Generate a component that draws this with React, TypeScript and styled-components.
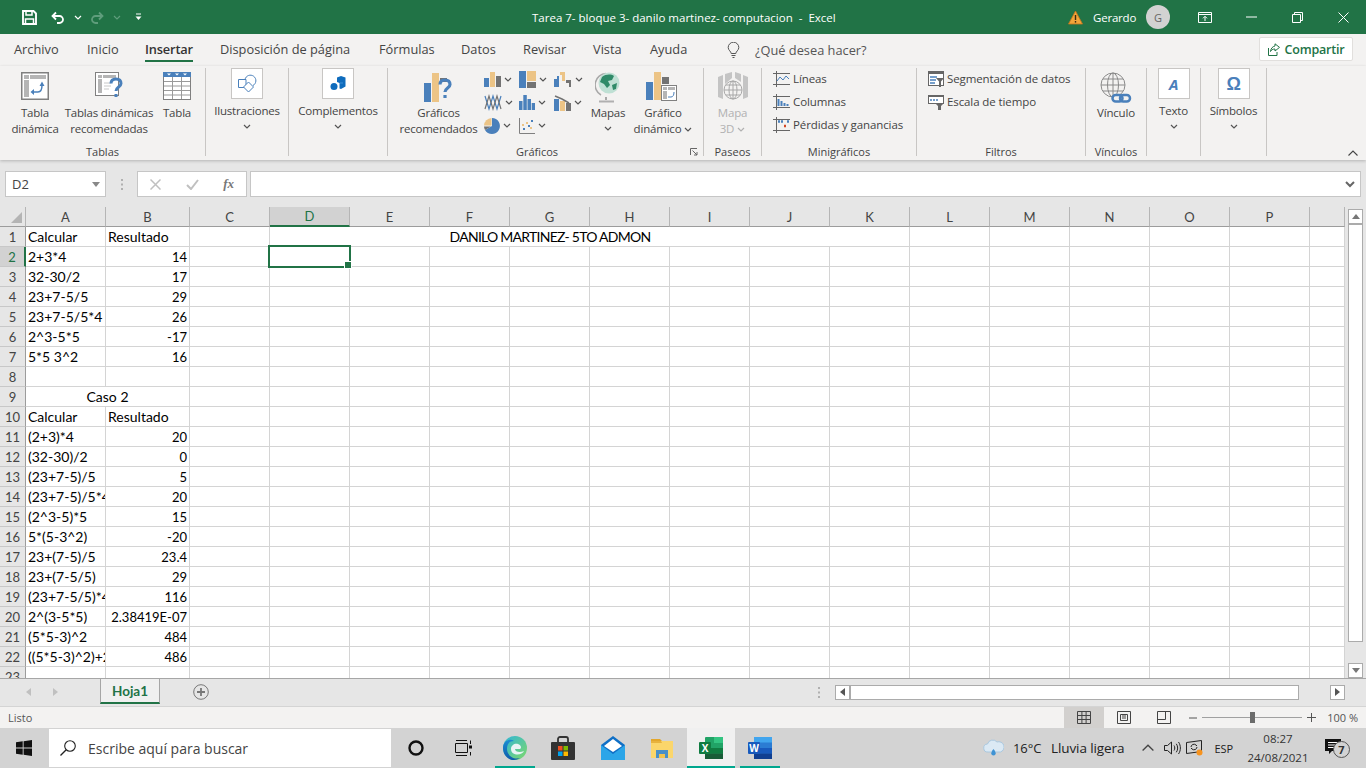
import React from 'react';
import styled, { createGlobalStyle } from 'styled-components';

const Global = createGlobalStyle`
  html, body { margin: 0; padding: 0; background: #e6e6e6; }
  * { box-sizing: border-box; }
  svg { display: block; flex: none; }
`;

const UI = `"Open Sans", "Noto Sans", "Liberation Sans", sans-serif`;
const SHEET = `Lato, "Liberation Sans", sans-serif`;
const GREEN = '#217346';
const BLUE = '#4a80bb';
const TAN = '#ecc486';
const GREY = '#737373';

const Page = styled.div`
  width: 1366px; height: 768px; overflow: hidden;
  display: flex; flex-direction: column;
  font-family: ${UI}; color: #444; background: #e6e6e6;
`;

/* ---------- title bar ---------- */
const TitleBar = styled.header`
  height: 34px; flex: none; background: ${GREEN}; color: #fff;
  display: flex; align-items: center; font-size: 11.5px;
`;
const Qat = styled.div`
  width: 532px; flex: none; display: flex; align-items: center; padding-left: 22px;
`;
const QatSlot = styled.div<{ $w: number }>`
  width: ${p => p.$w}px; display: flex; align-items: center;
`;
const TitleText = styled.div`flex: none; width: 536px; white-space: pre;`;
const UserName = styled.div`font-size: 11.5px; width: 53px; letter-spacing: -0.2px;`;
const WarnSlot = styled.div`width: 25px;`;
const Avatar = styled.div`
  width: 24px; height: 24px; border-radius: 50%; background: #d2d2d2; color: #666;
  font-size: 11px; display: flex; align-items: center; justify-content: center;
`;
const WinBtn = styled.div<{ $w: number }>`
  width: ${p => p.$w}px; display: flex; justify-content: center;
`;

/* ---------- tabs ---------- */
const TabRow = styled.nav`
  height: 32px; flex: none; background: #f3f2f1; position: relative;
  display: flex; align-items: flex-start; padding-left: 14px; font-size: 12.8px;
`;
const Tab = styled.div<{ $w: number; $active?: boolean }>`
  width: ${p => p.$w}px; flex: none; height: 28px; line-height: 31px; white-space: nowrap;
  color: ${p => (p.$active ? '#333' : '#444')};
  font-weight: ${p => (p.$active ? 600 : 400)};
  letter-spacing: ${p => (p.$active ? '-0.15px' : '0')};
  position: relative;
`;
const TabMark = styled.span`
  position: absolute; left: 0; top: 26px; width: 48px; height: 2px; background: ${GREEN};
`;
const Ask = styled.div`
  display: flex; align-items: center; gap: 15px; margin-left: 6px; height: 32px; font-size: 12.8px; color: #555;
`;
const Share = styled.button`
  margin-left: auto; margin-right: 13px; margin-top: 3px; width: 94px; height: 24px;
  background: #fff; border: 1px solid #e1dfdd; border-radius: 2px; color: ${GREEN};
  font: 600 12.5px ${UI}; letter-spacing: -0.2px; display: flex; align-items: center; justify-content: center; gap: 5px; padding: 0;
`;

/* ---------- ribbon ---------- */
const Ribbon = styled.section`
  height: 94px; flex: none; background: #f3f2f1; display: flex; padding-top: 2px;
  box-shadow: 0 1px 3px rgba(0,0,0,.22); position: relative; z-index: 1;
`;
const Group = styled.div<{ $w: number }>`
  width: ${p => p.$w}px; flex: none; height: 88px; display: flex; flex-direction: column;
  border-right: 1px solid #c8c6c4; position: relative;
`;
const GroupBody = styled.div<{ $pl?: number }>`
  flex: 1; min-height: 0; display: flex; padding-left: ${p => p.$pl ?? 0}px;
`;
const GroupLabel = styled.div<{ $pr?: number }>`
  height: 12px; line-height: 16px; text-align: center; font-size: 11px; color: #444;
  padding-right: ${p => p.$pr ?? 0}px; white-space: nowrap;
`;
const Launcher = styled.div`position: absolute; right: 5px; bottom: 0;`;
const Large = styled.div<{ $w: number; $muted?: boolean }>`
  width: ${p => p.$w}px; flex: none; display: flex; flex-direction: column; align-items: center;
  font-size: 11.5px; line-height: 16px; text-align: center; letter-spacing: -0.2px; white-space: nowrap;
  color: ${p => (p.$muted ? '#b1b1b1' : '#444')};
`;
const Caption = styled.div``;
const LargeIcon = styled.div`
  height: 37px; flex: none; display: flex; align-items: flex-start; padding-top: 4px;
`;
const Boxed = styled.div`
  width: 32px; height: 31px; flex: none; background: #fff; border: 1px solid #c8c6c4;
  display: flex; align-items: center; justify-content: center; margin-bottom: 4px;
`;
const BoxGlyph = styled.span<{ $omega?: boolean }>`
  color: ${BLUE}; font-weight: 700;
  font-size: ${p => (p.$omega ? 18 : 15)}px;
  font-family: ${p => (p.$omega ? `"Liberation Sans", sans-serif` : UI)};
  font-style: ${p => (p.$omega ? 'normal' : 'italic')};
`;
const ChevronRow = styled.div`height: 15px; flex: none; display: flex; align-items: center; justify-content: center;`;
const InlineChev = styled.span`display: inline-flex; vertical-align: middle; margin-left: 3px;`;
const ChartGrid = styled.div`
  width: 105px; flex: none; display: grid; grid-template-columns: 35px 35px 35px;
  grid-auto-rows: 23px; margin-left: 4px; align-content: start;
`;
const ChartCell = styled.div`display: flex; align-items: center; gap: 3px;`;
const SmallList = styled.div`display: flex; flex-direction: column; gap: 2px; width: 100%;`;
const SmallRow = styled.div`
  height: 21px; display: flex; align-items: center; gap: 3px; font-size: 11.5px; letter-spacing: -0.1px; color: #444; white-space: nowrap;
`;
const Collapse = styled.div`position: absolute; right: 8px; bottom: 4px;`;

/* ---------- formula bar ---------- */
const FormulaBar = styled.div`
  height: 47px; flex: none; display: flex; align-items: flex-start; padding: 11px 5px 0 5px; background: #e6e6e6;
`;
const FieldBox = styled.div`
  background: #fff; border: 1px solid #c6c6c6; height: 26px; display: flex; align-items: center;
`;
const NameBox = styled(FieldBox)`
  width: 101px; flex: none; justify-content: space-between; padding: 0 5px 0 6px;
  font-size: 13px; color: #444;
`;
const Dots = styled.div`width: 31px; flex: none; height: 26px; display: flex; align-items: center; justify-content: center;`;
const FxBox = styled(FieldBox)`
  width: 110px; flex: none; display: flex; justify-content: space-between; padding: 0 12px; margin-right: 3px;
`;
const Fx = styled.span`font: italic 700 13px "Liberation Serif", serif; color: #777;`;
const Input = styled(FieldBox)`flex: 1; justify-content: flex-end; padding-right: 5px;`;

/* ---------- sheet ---------- */
const SheetArea = styled.div`flex: 1; min-height: 0; display: flex; background: #e6e6e6;`;
const Sheet = styled.div`
  width: 1345px; flex: none; overflow: hidden; display: grid;
  grid-template-columns: 26px 80px 84px repeat(14, 80px) 35px;
  grid-auto-rows: 20px; background: #fff; align-content: start;
  font-family: ${SHEET}; font-size: 14px; color: #000;
`;
const Corner = styled.div`
  background: #e6e6e6; border-bottom: 1px solid #9c9c9c; border-right: 1px solid #b5b5b5; position: relative;
  &::after {
    content: ''; position: absolute; right: 3px; bottom: 3px; width: 0; height: 0;
    border-left: 11px solid transparent; border-bottom: 11px solid #b4b4b4;
  }
`;
const ColHead = styled.div<{ $sel?: boolean }>`
  background: ${p => (p.$sel ? '#d2d2d2' : '#e6e6e6')};
  border-bottom: ${p => (p.$sel ? `2px solid ${GREEN}` : '1px solid #9c9c9c')};
  border-right: 1px solid #b5b5b5;
  color: ${p => (p.$sel ? GREEN : '#444')};
  display: flex; align-items: center; justify-content: center; font-size: 13px;
`;
const RowHead = styled.div<{ $sel?: boolean }>`
  background: ${p => (p.$sel ? '#d2d2d2' : '#e6e6e6')};
  border-right: ${p => (p.$sel ? `2px solid ${GREEN}` : '1px solid #9c9c9c')};
  border-bottom: 1px solid #c8c8c8;
  color: ${p => (p.$sel ? GREEN : '#444')};
  display: flex; align-items: center; justify-content: center; font-size: 13px;
`;
const Cell = styled.div<{ $span?: number; $sel?: boolean }>`
  grid-column: span ${p => p.$span ?? 1};
  border-right: 1px solid #d4d4d4;
  border-bottom: 1px solid #d4d4d4;
  padding: 0 2px; line-height: 20px; white-space: nowrap; overflow: ${p => (p.$sel ? 'visible' : 'hidden')};
  position: relative;
`;
const NumberCell = styled(Cell)`text-align: right; font-size: 13px;`;
const CenterCell = styled(Cell)`text-align: center;`;
const TitleCell = styled(CenterCell)`border-right: none; letter-spacing: -0.75px;`;
const Selection = styled.span`
  position: absolute; left: -2px; top: -2px; width: 83px; height: 23px;
  border: 2px solid ${GREEN}; z-index: 2;
  &::after {
    content: ''; position: absolute; right: -3px; bottom: -3px; width: 6px; height: 6px;
    background: ${GREEN}; border: 1px solid #fff;
  }
`;
const VScroll = styled.div`
  flex: 1; display: flex; flex-direction: column; align-items: center; padding: 2px 3px 0 3px; position: relative;
`;
const ScrollBtn = styled.div`
  width: 15px; height: 15px; background: #fff; border: 1px solid #ababab; flex: none;
  display: flex; align-items: center; justify-content: center;
`;
const VThumb = styled.div`
  width: 15px; height: 418px; background: #fff; border: 1px solid #ababab; flex: none;
`;
const VRest = styled.div`flex: 1;`;

/* ---------- sheet tabs ---------- */
const SheetBar = styled.div`
  height: 28px; flex: none; display: flex; align-items: flex-start; background: #e6e6e6;
  border-top: 1px solid #a6a6a6;
`;
const NavArrows = styled.div`
  width: 100px; height: 26px; flex: none; display: flex; align-items: center; gap: 22px; padding-left: 26px;
`;
const SheetTab = styled.div`
  width: 60px; height: 26px; margin-top: -1px; flex: none; background: #f0f0f0;
  border: 1px solid #a6a6a6; border-top: 1px solid #a6a6a6; border-bottom: 2px solid ${GREEN};
  color: ${GREEN}; font: 700 13.5px ${SHEET}; display: flex; align-items: center; justify-content: center;
`;
const AddSheet = styled.div`margin-left: 33px; height: 26px; display: flex; align-items: center;`;
const HScrollWrap = styled.div`
  margin-left: auto; margin-right: 21px; height: 26px; display: flex; align-items: center;
`;
const Grip = styled.div`margin-right: 15px;`;
const HTrack = styled.div`width: 449px; height: 15px; background: #fff; border: 1px solid #ababab;`;
const HRest = styled.div`width: 31px;`;

/* ---------- status bar ---------- */
const StatusBar = styled.footer`
  height: 22px; flex: none; background: #f3f2f1; display: flex; align-items: center; font-size: 11px;
  border-top: 1px solid #d4d4d4; padding-left: 8px; color: #555;
`;
const ViewBtn = styled.div<{ $active?: boolean }>`
  width: 40px; height: 21px; display: flex; align-items: center; justify-content: center;
  background: ${p => (p.$active ? '#d2d0ce' : 'transparent')};
`;
const Views = styled.div`margin-left: auto; display: flex;`;
const ZoomBox = styled.div`
  display: flex; align-items: center; margin-left: 5px; width: 127px; color: #555;
`;
const SliderLine = styled.div`
  width: 100px; height: 1px; background: #a0a0a0; margin: 0 5px 0 5px; position: relative;
`;
const SliderThumb = styled.span`
  position: absolute; left: 48px; top: -5px; width: 5px; height: 11px; background: #6b6b6b;
`;
const Pct = styled.div`margin-left: 11px; margin-right: 8px; font-size: 11px; white-space: nowrap;`;

/* ---------- taskbar ---------- */
const Taskbar = styled.footer`
  height: 40px; flex: none; background: #d3d3d3; display: flex; align-items: stretch; color: #222;
`;
const Start = styled.div`width: 49px; flex: none; display: flex; align-items: center; justify-content: center; padding-right: 1px;`;
const Search = styled.div`
  width: 342px; flex: none; margin: 1px 0; background: #fff; display: flex; align-items: center;
  padding-left: 11px; gap: 12px; font-size: 14px; color: #444;
`;
const TaskSlot = styled.div<{ $w: number; $on?: boolean; $active?: boolean; $ml?: number }>`
  width: ${p => p.$w}px; flex: none; display: flex; align-items: center; justify-content: center;
  margin-left: ${p => p.$ml ?? 0}px;
  background: ${p => (p.$active ? '#f0f0f0' : 'transparent')};
  border-bottom: 2px solid ${p => (p.$on ? '#00a78e' : 'transparent')};
  padding-top: 2px;
`;
const Tray = styled.div`
  margin-left: auto; display: flex; align-items: center; font-size: 13px; color: #222;
`;
const TrayText = styled.span<{ $w: number; $size?: number }>`
  width: ${p => p.$w}px; flex: none; white-space: nowrap; font-size: ${p => p.$size ?? 13}px; letter-spacing: -0.1px;
`;
const TraySlot = styled.div<{ $w: number }>`
  width: ${p => p.$w}px; flex: none; display: flex; justify-content: center; align-items: center;
`;
const Clock = styled.div`
  width: 74px; flex: none; text-align: center; font-size: 11.5px; line-height: 19px; color: #333;
`;
const Notify = styled.div`
  width: 36px; flex: none; position: relative; height: 40px; margin-left: 10px; margin-right: 5px;
  display: flex; align-items: flex-start; justify-content: flex-start; padding: 11px 0 0 0;
`;
const Badge = styled.span`
  position: absolute; left: 8px; top: 13px; width: 17px; height: 17px; border-radius: 50%;
  border: 1.5px solid #555; background: #d3d3d3; font-size: 11px; font-weight: 700; color: #333;
  display: flex; align-items: center; justify-content: center; line-height: 1;
`;

/* ---------- icons ---------- */
const Chev = ({ c = '#555' }: { c?: string }) => (
  <svg width="8" height="5" viewBox="0 0 8 5"><path d="M1 1l3 3 3-3" fill="none" stroke={c} strokeWidth="1.2" /></svg>
);
const Save = () => (
  <svg width="15" height="15" viewBox="0 0 15 15" fill="none" stroke="#fff" strokeWidth="1.9">
    <path d="M1 1h10.500L14 3.500V14H1z" /><path d="M4 1v4h6V1" strokeWidth="1.500" /><path d="M3.500 14V9h8v5" strokeWidth="1.500" />
  </svg>
);
const Undo = ({ c = '#fff' }: { c?: string }) => (
  <svg width="14" height="13" viewBox="0 0 14 13" fill="none" stroke={c} strokeWidth="1.8">
    <path d="M5 1.500L1.500 5 5 8.500" /><path d="M2 5h6.500a3.500 3.500 0 0 1 0 7H6" />
  </svg>
);
const Redo = ({ c = '#5f9d7c' }: { c?: string }) => (
  <svg width="14" height="13" viewBox="0 0 14 13" fill="none" stroke={c} strokeWidth="1.8">
    <path d="M9 1.500L12.500 5 9 8.500" /><path d="M12 5H5.500a3.500 3.500 0 0 0 0 7H8" />
  </svg>
);
const Customize = () => (
  <svg width="7" height="8" viewBox="0 0 7 8"><path d="M1 1h5" stroke="#fff" /><path d="M0.500 3.500h6L3.500 7z" fill="#fff" /></svg>
);
const Warn = () => (
  <svg width="15" height="15" viewBox="0 0 15 15">
    <path d="M7.500 1L14.500 14H.5z" fill="#f2a53a" stroke="#c8741a" strokeWidth=".8" />
    <path d="M7.500 5v5" stroke="#3d2a10" strokeWidth="1.400" /><path d="M7.500 11v1.600" stroke="#3d2a10" strokeWidth="1.400" />
  </svg>
);
const RibbonDisplay = () => (
  <svg width="14" height="11" viewBox="0 0 14 11" fill="none" stroke="#fff"><path d="M.5.500h13v10H.5z" /><path d="M.5 2.500h13" /><path d="M7 9V4.500M5 6.300l2-2 2 2" /></svg>
);
const Minimize = () => <svg width="11" height="2" viewBox="0 0 11 2"><path d="M0 1h11" stroke="#fff" /></svg>;
const RestoreWin = () => (
  <svg width="11" height="11" viewBox="0 0 11 11" fill="none" stroke="#fff"><path d="M.5 2.500h8v8h-8zM2.500 2.500v-2h8v8h-2" /></svg>
);
const CloseX = () => (
  <svg width="11" height="11" viewBox="0 0 11 11" stroke="#fff"><path d="M.5.500l10 10M10.500.500l-10 10" /></svg>
);
const Bulb = () => (
  <svg width="13" height="17" viewBox="0 0 13 17" fill="none" stroke="#555">
    <path d="M4.200 11.500c0-2-3-3.200-3-6a5.300 5.300 0 0 1 10.600 0c0 2.800-3 4-3 6z" /><path d="M4.500 13.500h4M5.500 15.500h2" />
  </svg>
);
const ShareIcon = () => (
  <svg width="12" height="13" viewBox="0 0 12 13" fill="none" stroke={GREEN}>
    <path d="M.5 5v7.500h8.500V9" /><path d="M7 .8l4.500 3.600L7 8V6C4.500 6 3.300 7 2.500 8.500 2.800 5.500 4.500 3.500 7 3z" />
  </svg>
);
const PivotIcon = () => (
  <svg width="28" height="28" viewBox="0 0 28 28">
    <rect x=".75" y=".75" width="26.500" height="26.500" fill="#fff" stroke="#808080" strokeWidth="1.500" />
    <rect x="3" y="3" width="5" height="4" fill="#b5b5b5" /><rect x="9" y="3" width="16" height="4" fill="#b5b5b5" />
    <rect x="3" y="8" width="5" height="17" fill="#b5b5b5" />
    <path d="M11 20h6c3 0 4-3 4-7" fill="none" stroke={BLUE} strokeWidth="1.500" />
    <path d="M13 17l-3.500 3 3.500 3zM18.500 14l2.500-4.500 2.500 4.500z" fill={BLUE} />
  </svg>
);
const Question = ({ sw = 3 }: { sw?: number }) => (
  <g fill="none" stroke={BLUE} strokeWidth={sw}>
    <path d="M-5-6.500c0-3 2-4.500 5-4.500s5 1.700 5 4.500c0 3.500-5 3.500-5 7.500" />
    <path d="M0 4v3" />
  </g>
);
const RecPivotIcon = () => (
  <svg width="28" height="31" viewBox="0 0 28 31">
    <rect x=".5" y=".5" width="23" height="23" fill="#fff" stroke="#808080" />
    <rect x="3" y="3" width="4" height="3" fill="#b5b5b5" /><rect x="8" y="3" width="13" height="3" fill="#b5b5b5" />
    <rect x="3" y="7" width="4" height="14" fill="#b5b5b5" /><path d="M9 11h7M9 14h7M9 17h5" stroke="#c8c8c8" />
    <g transform="translate(21 18)"><Question /></g>
  </svg>
);
const TableIcon = () => (
  <svg width="28" height="28" viewBox="0 0 28 28">
    <rect x=".5" y=".5" width="27" height="27" fill="#fff" stroke="#808080" />
    <rect y="0" width="28" height="5" fill={BLUE} />
    <path d="M4 1.500h4L6 3.500zM12 1.500h4L14 3.500zM20 1.500h4L22 3.500z" fill="#fff" />
    <path d="M1 9.500h26M1 14h26M1 18.500h26M1 23h26M9.500 5v22M18.500 5v22" stroke="#9a9a9a" />
  </svg>
);
const ShapesIcon = () => (
  <svg width="20" height="20" viewBox="0 0 20 20" fill="none" stroke={BLUE}>
    <path d="M1.500 5.500h7.500v8H1.500z" /><path d="M8 5.500a5.500 5.500 0 1 1 8 6" /><path d="M11.500 8l5 5-5 5-5-5z" fill="#fff" />
  </svg>
);
const AddinIcon = () => (
  <svg width="16" height="16" viewBox="0 0 16 16">
    <path d="M7 1.500L11 0l4.500 1.500v9L11 13l-1.500-.5V7L7 6z" fill="#0f6cbd" /><circle cx="4" cy="10.500" r="3.500" fill="#0f6cbd" /><path d="M10 7h3" stroke="#3c8fd8" />
  </svg>
);
const RecChartIcon = () => (
  <svg width="30" height="31" viewBox="0 0 30 31">
    <rect x="0" y="11" width="7" height="19" fill={BLUE} />
    <rect x="8" y="1" width="7" height="29" fill={TAN} />
    <rect x="16" y="6" width="7" height="4" fill={GREY} />
    <g transform="translate(21 19)"><Question sw={3.200} /></g>
  </svg>
);
const Bars1 = () => (
  <svg width="17" height="17" viewBox="0 0 17 17"><rect x="0" y="7" width="5" height="9" fill={BLUE} /><rect x="6" y="1" width="5" height="15" fill={TAN} /><rect x="12" y="5" width="5" height="11" fill={GREY} /></svg>
);
const Tree = () => (
  <svg width="17" height="17" viewBox="0 0 17 17"><rect x="0" y="0" width="7" height="17" fill={BLUE} /><rect x="8" y="0" width="9" height="10" fill={TAN} /><rect x="8" y="11" width="9" height="6" fill={GREY} /></svg>
);
const Waterfall = () => (
  <svg width="18" height="17" viewBox="0 0 18 17"><path d="M0 16V8h3V5h2v11z" fill={BLUE} /><path d="M6 1h5v9H8V4H6z" fill={TAN} /><path d="M12 9h5v7h-2v-4h-3z" fill={GREY} /></svg>
);
const LinesChart = () => (
  <svg width="18" height="17" viewBox="0 0 18 17" fill="none"><path d="M1 2l4 13 4-13 4 13 4-13" stroke={BLUE} strokeWidth="1.200" /><path d="M1 15l4-13 4 13 4-13 4 13" stroke={GREY} strokeWidth="1.200" /></svg>
);
const Histogram = () => (
  <svg width="16" height="17" viewBox="0 0 16 17"><rect x="0" y="7" width="3.500" height="9" fill={BLUE} /><rect x="4.300" y="1" width="3.500" height="15" fill={BLUE} /><rect x="8.500" y="5" width="3.500" height="11" fill={BLUE} /><rect x="12.700" y="9" width="3.300" height="7" fill={BLUE} /></svg>
);
const Combo = () => (
  <svg width="17" height="17" viewBox="0 0 17 17"><rect x="0" y="5" width="5" height="12" fill={BLUE} /><rect x="6" y="7" width="5" height="10" fill={TAN} /><rect x="12" y="9" width="5" height="8" fill={GREY} /><path d="M1 2l7 3 7 4" stroke={GREY} strokeWidth="1.500" fill="none" /></svg>
);
const Pie = () => (
  <svg width="16" height="16" viewBox="0 0 16 16"><path d="M8 8V0a8 8 0 1 1-7 12z" fill={BLUE} /><path d="M7.500 7.500V0A8 8 0 0 0 0 7.500z" fill={TAN} /><path d="M0 8.500h7l-6 3.500A8 8 0 0 1 0 8.500z" fill={GREY} /></svg>
);
const Scatter = () => (
  <svg width="16" height="16" viewBox="0 0 16 16"><path d="M.5 0v15.500H16" stroke="#808080" fill="none" /><g fill={BLUE}><rect x="4" y="10" width="2" height="2" /><rect x="9" y="7" width="2" height="2" /><rect x="12" y="2" width="2" height="2" /></g><g fill={TAN}><rect x="7" y="4" width="2" height="2" /><rect x="11" y="9" width="2" height="2" /><rect x="3" y="6" width="2" height="2" /></g></svg>
);
const Globe = () => (
  <svg width="26" height="31" viewBox="0 0 26 31">
    <path d="M11 1.500A11.500 11.500 0 0 0 6 23" fill="none" stroke="#a8a8a8" strokeWidth="1.500" />
    <circle cx="14" cy="11" r="10.500" fill="#bfe0d4" />
    <path d="M7 5c4-3 9-3 12-1l-2 4-4 1 2 4-3 3-3-4-4-2z" fill="#2f8a68" />
    <path d="M17 13l5-2-1 6-3 1z" fill="#2f8a68" />
    <path d="M11 25v3" stroke="#a8a8a8" strokeWidth="2" /><path d="M4 29.500h15" stroke="#b0b0b0" strokeWidth="2" />
  </svg>
);
const PivotChart = () => (
  <svg width="34" height="31" viewBox="0 0 34 31">
    <rect x="0" y="10" width="7" height="18" fill={BLUE} /><rect x="8" y="0" width="7" height="28" fill={TAN} /><rect x="16" y="5" width="7" height="7" fill={GREY} />
    <rect x="15.500" y="13.500" width="15" height="15" fill="#fff" stroke="#808080" />
    <rect x="17" y="15" width="4" height="3" fill="#b5b5b5" /><rect x="22" y="15" width="7" height="3" fill="#b5b5b5" /><rect x="17" y="19" width="4" height="8" fill="#b5b5b5" />
    <path d="M22 25h3c2 0 3-2 3-5" stroke={BLUE} fill="none" />
  </svg>
);
const Map3D = () => (
  <svg width="32" height="31" viewBox="0 0 32 31">
    <path d="M1 5l5-2v24l-5-2zM8 2l7-2v6l-7 6zM18 0l6 2v8l-6-4zM26 3l5 2v20l-5 2z" fill="#c4c4c4" />
    <circle cx="16" cy="18" r="9" fill="#f3f2f1" stroke="#a8a8a8" /><path d="M7 18h18M16 9v18M9 13h14M9 23h14" stroke="#a8a8a8" /><ellipse cx="16" cy="18" rx="4" ry="9" fill="none" stroke="#a8a8a8" />
  </svg>
);
const SparkFrame = ({ children }: { children: React.ReactNode }) => (
  <svg width="17" height="16" viewBox="0 0 17 16" fill="none">
    <path d="M3.500 0v16M0 2.500h17M0 13.500h17" stroke="#666" />{children}
  </svg>
);
const SparkLine = () => <SparkFrame><path d="M4 10l3-4 3 3 3-4 3 3" stroke={BLUE} /></SparkFrame>;
const SparkCols = () => <SparkFrame><path d="M5.500 12V5M8.500 12V7M11.500 12V9M14.500 12V10" stroke={BLUE} strokeWidth="2" /></SparkFrame>;
const SparkWin = () => <SparkFrame><path d="M5 4.500h2M8 4.500h2" stroke={BLUE} strokeWidth="2.500" /><path d="M11 9h2" stroke="#d24726" strokeWidth="2.500" /><path d="M14 4.500h2" stroke={BLUE} strokeWidth="2.500" /></SparkFrame>;
const Slicer = () => (
  <svg width="16" height="16" viewBox="0 0 16 16">
    <rect x=".5" y=".5" width="15" height="14" fill="#fff" stroke="#666" /><rect x="0" y="0" width="16" height="3" fill="#666" />
    <path d="M2 6h7M2 9h6M2 12h5" stroke={BLUE} strokeWidth="1.500" /><path d="M8 7h8l-3 3.500V16h-2v-5.500z" fill="#666" />
  </svg>
);
const Timeline = () => (
  <svg width="16" height="16" viewBox="0 0 16 16">
    <rect x=".5" y="1.500" width="15" height="8" fill="#fff" stroke="#666" /><rect x="0" y="1" width="16" height="2" fill="#666" />
    <path d="M2 6h2M5 6h2M8 6h2" stroke={BLUE} strokeWidth="1.500" /><path d="M7 9h9l-3 3v4h-3v-4z" fill="#666" />
  </svg>
);
const LinkGlobe = () => (
  <svg width="32" height="32" viewBox="0 0 32 32" fill="none">
    <circle cx="13" cy="13" r="12" stroke="#8a8a8a" /><ellipse cx="13" cy="13" rx="5.500" ry="12" stroke="#8a8a8a" />
    <path d="M1 13h24M3 7h20M3 19h20M13 1v24" stroke="#8a8a8a" />
    <g stroke={BLUE} strokeWidth="2.500"><rect x="12.500" y="23" width="10" height="6.500" rx="3.200" fill="#f3f2f1" /><rect x="20" y="23" width="10" height="6.500" rx="3.200" /></g>
  </svg>
);
const Launch = () => (
  <svg width="8" height="8" viewBox="0 0 8 8" fill="none" stroke="#666"><path d="M.5 7V.5H7" /><path d="M2.500 2.500L7 7M7 4v3H4" /></svg>
);
const Up = ({ w = 10 }: { w?: number }) => <svg width={w} height={(w * 6) / 10} viewBox="0 0 10 6" fill="none" stroke="#444" strokeWidth="1.100"><path d="M.5 5.500L5 1l4.500 4.500" /></svg>;
const Tri = ({ d, c = '#777' }: { d: 'up' | 'down' | 'left' | 'right'; c?: string }) => {
  const paths = { up: 'M0 5L4 0l4 5z', down: 'M0 0h8L4 5z', left: 'M5 0v8L0 4z', right: 'M0 0v8l5-4z' };
  const side = d === 'left' || d === 'right';
  return <svg width={side ? 5 : 8} height={side ? 8 : 5} viewBox={side ? '0 0 5 8' : '0 0 8 5'}><path d={paths[d]} fill={c} /></svg>;
};
const XMark = () => <svg width="11" height="11" viewBox="0 0 11 11" stroke="#c0c0c0" strokeWidth="1.500"><path d="M.5.500l10 10M10.500.500l-10 10" /></svg>;
const Check = () => <svg width="13" height="11" viewBox="0 0 13 11" fill="none" stroke="#c0c0c0" strokeWidth="2"><path d="M1 6l4 4 7-9" /></svg>;
const VDots = () => <svg width="2" height="11" viewBox="0 0 2 11" fill="#b0b0b0"><rect width="2" height="2" /><rect y="4.500" width="2" height="2" /><rect y="9" width="2" height="2" /></svg>;
const ChevBold = () => <svg width="10" height="7" viewBox="0 0 10 7" fill="none" stroke="#666" strokeWidth="2"><path d="M1 1l4 4 4-4" /></svg>;
const Plus = () => (
  <svg width="16" height="16" viewBox="0 0 16 16" fill="none" stroke="#777"><circle cx="8" cy="8" r="7.300" /><path d="M8 4v8M4 8h8" strokeWidth="1.800" /></svg>
);
const ViewNormal = () => <svg width="14" height="13" viewBox="0 0 14 13" fill="none" stroke="#444"><path d="M.5.500h13v12H.5zM.5 4.500h13M.5 8.500h13M4.900.500v12M9.100.500v12" /></svg>;
const ViewPage = () => <svg width="14" height="13" viewBox="0 0 14 13" fill="none" stroke="#444"><path d="M.5.500h13v12H.5z" /><path d="M3.500 3.500h7v6h-7zM5 5h4M5 7h4" /></svg>;
const ViewBreak = () => <svg width="14" height="13" viewBox="0 0 14 13" fill="none" stroke="#444"><path d="M.5.500h13v12H.5zM.5 8.500h8V.500" /></svg>;
const Minus = () => <svg width="8" height="2" viewBox="0 0 8 2"><path d="M0 1h8" stroke="#555" /></svg>;
const PlusSmall = () => <svg width="9" height="9" viewBox="0 0 9 9"><path d="M0 4.500h9M4.500 0v9" stroke="#555" /></svg>;
const Windows = () => (
  <svg width="16" height="16" viewBox="0 0 16 16" fill="#111">
    <path d="M0 2.300L6.700 1.300V7.500H0zM7.600 1.200L16 0V7.500H7.600zM0 8.400H6.700V14.700L0 13.700zM7.600 8.400H16V16L7.600 14.800z" />
  </svg>
);
const SearchGlass = () => (
  <svg width="16" height="16" viewBox="0 0 16 16" fill="none" stroke="#222" strokeWidth="1.100"><circle cx="10" cy="6" r="5.300" /><path d="M6.200 9.800L.5 15.500" strokeWidth="1.300" /></svg>
);
const Cortana = () => <svg width="16" height="16" viewBox="0 0 16 16" fill="none"><circle cx="8" cy="8" r="6.500" stroke="#111" strokeWidth="2.400" /></svg>;
const TaskView = () => (
  <svg width="17" height="16" viewBox="0 0 17 16" fill="none" stroke="#111"><path d="M1 .5h11M1 15.500h11M.5 3.500h12v9H.5z" /><path d="M15.500 .5v3.500M15.500 12v3.500" /><rect x="14" y="5.500" width="3" height="3" fill="#111" stroke="none" /></svg>
);
const Edge = () => (
  <svg width="24" height="24" viewBox="0 0 24 24">
    <defs>
      <linearGradient id="eg1" x1="0" y1="0" x2="1" y2="1"><stop offset="0" stopColor="#2fb5d8" /><stop offset="1" stopColor="#7fd96a" /></linearGradient>
      <linearGradient id="eg2" x1="0" y1="0" x2="0" y2="1"><stop offset="0" stopColor="#1d8bd2" /><stop offset="1" stopColor="#0f5cab" /></linearGradient>
    </defs>
    <circle cx="12" cy="12" r="12" fill="url(#eg1)" />
    <path d="M0 12C0 5 7 2 11 5c-5 0-7 3-7 8 0 6 6 11 13 9-2 1-4 2-6 2C5 24 0 19 0 12z" fill="url(#eg2)" />
    <path d="M8 13c0-4 4-6 7-5 3 1 4 4 2 5h-5c0 3 5 4 9 2-2 5-13 5-13-2z" fill="#e9f4f6" />
  </svg>
);
const Store = () => (
  <svg width="24" height="24" viewBox="0 0 24 24">
    <path d="M7 6V3a2 2 0 0 1 2-2h6a2 2 0 0 1 2 2v3" fill="none" stroke="#333" strokeWidth="1.800" />
    <rect x="0" y="6" width="24" height="18" rx="1" fill="#333" />
    <rect x="7" y="10" width="4.500" height="4.500" fill="#f25022" /><rect x="12.500" y="10" width="4.500" height="4.500" fill="#7fba00" />
    <rect x="7" y="15.500" width="4.500" height="4.500" fill="#00a4ef" /><rect x="12.500" y="15.500" width="4.500" height="4.500" fill="#ffb900" />
  </svg>
);
const Mail = () => (
  <svg width="24" height="24" viewBox="0 0 24 24">
    <path d="M0 9L12 0l12 9v14H0z" fill="#0f6fc6" /><path d="M3 10L12 3l9 7-9 6z" fill="#fff" />
    <path d="M0 9l12 9 12-9v15H0z" fill="#2ba5e8" />
  </svg>
);
const Folder = () => (
  <svg width="22" height="20" viewBox="0 0 22 20">
    <path d="M0 1h9l2 2H0z" fill="#e3a72c" /><rect x="0" y="3" width="22" height="17" fill="#fbd66b" /><path d="M0 3h10l1 2H0z" fill="#e8b33e" />
    <path d="M5 20v-8h12v8h-3v-4H8v4z" fill="#4a90c8" /><rect x="8" y="16" width="6" height="4" fill="#f3c44e" />
  </svg>
);
const TileLetter = styled.text`font: 700 10px ${UI};`;
const ExcelLogo = () => (
  <svg width="24" height="22" viewBox="0 0 24 22">
    <rect x="6" y="0" width="18" height="22" rx="1" fill="#21a366" /><rect x="15" y="0" width="9" height="6" fill="#33c481" />
    <rect x="6" y="11" width="18" height="5.500" fill="#107c41" />
    <rect x="6" y="16.500" width="18" height="5.500" fill="#185c37" />
    <rect x="0" y="5" width="12" height="12" rx="1" fill="#107c41" />
    <TileLetter x="6" y="14.500" textAnchor="middle" fill="#fff">X</TileLetter>
  </svg>
);
const WordLogo = () => (
  <svg width="24" height="22" viewBox="0 0 24 22">
    <rect x="6" y="0" width="18" height="22" rx="1" fill="#2b7cd3" /><rect x="6" y="0" width="18" height="5.500" fill="#41a5ee" />
    <rect x="6" y="11" width="18" height="5.500" fill="#185abd" /><rect x="6" y="16.500" width="18" height="5.500" fill="#103f91" />
    <rect x="0" y="5" width="12" height="12" rx="1" fill="#185abd" />
    <TileLetter x="6" y="14.500" textAnchor="middle" fill="#fff">W</TileLetter>
  </svg>
);
const Cloud = () => (
  <svg width="21" height="20" viewBox="0 0 21 20">
    <path d="M5 14a4 4 0 0 1-.5-8 5.500 5.500 0 0 1 9.500-2 4.500 4.500 0 0 1 3.500 10z" fill="#dbe9f4" stroke="#a9c8e0" />
    <path d="M10.500 11c1.500 2 2.200 3.200 2.200 4.300a2.200 2.200 0 0 1-4.400 0c0-1.100.7-2.300 2.200-4.300z" fill="#3f93d4" />
  </svg>
);
const Speaker = () => (
  <svg width="17" height="14" viewBox="0 0 17 14" fill="none" stroke="#222"><path d="M.5 4.500h3L7.500 1v12l-4-3.500h-3z" /><path d="M10 4.500c1 1.500 1 3.500 0 5M12.300 2.800c1.800 2.500 1.800 6 0 8.500M14.500 1c2.500 3.500 2.500 8.500 0 12" /></svg>
);
const SyncPc = () => (
  <svg width="18" height="16" viewBox="0 0 18 16" fill="none" stroke="#222"><path d="M.5 2.500L15.500.5v11L.5 13.500z" /><path d="M5 7a3 3 0 0 1 5-2l1 1M11 7a3 3 0 0 1-5 2l-1-1" /><circle cx="13.500" cy="12.500" r="3" fill="#f7931e" stroke="none" /></svg>
);
const Message = () => (
  <svg width="16" height="16" viewBox="0 0 16 16"><path d="M0 0h16v12H7l-3 3v-3H0z" fill="#111" /><path d="M3 3.500h10M3 6h10M3 8.500h6" stroke="#fff" /></svg>
);

/* ---------- data ---------- */
const COLS = ['A','B','C','D','E','F','G','H','I','J','K','L','M','N','O','P',''];
const DATA: [string, string][] = [
  ['Calcular','Resultado'],['2+3*4','14'],['32-30/2','17'],['23+7-5/5','29'],['23+7-5/5*4','26'],
  ['2^3-5*5','-17'],['5*5 3^2','16'],['',''],['',''],['Calcular','Resultado'],
  ['(2+3)*4','20'],['(32-30)/2','0'],['(23+7-5)/5','5'],['(23+7-5)/5*4','20'],['(2^3-5)*5','15'],
  ['5*(5-3^2)','-20'],['23+(7-5)/5','23.4'],['23+(7-5/5)','29'],['(23+7-5/5)*4','116'],
  ['2^(3-5*5)','2.38419E-07'],['(5*5-3)^2','484'],['((5*5-3)^2)+2','486'],['',''],
];
const TEXT_B = new Set([0, 9]);

const tabs: [string, number, boolean?][] = [
  ['Archivo', 73], ['Inicio', 58], ['Insertar', 75, true], ['Disposición de página', 159], ['Fórmulas', 82],
  ['Datos', 62], ['Revisar', 70], ['Vista', 57], ['Ayuda', 71],
];

const renderRow = (i: number) => {
  const n = i + 1;
  const [a, b] = DATA[i];
  const head = <RowHead key={`h${n}`} $sel={n === 2}>{n}</RowHead>;
  const rest = COLS.slice(2);
  if (n === 1) {
    return [head,
      <Cell key="r1a">{a}</Cell>,
      <Cell key="r1b">{b}</Cell>,
      <Cell key="r1c" />,
      <TitleCell key="r1d" $span={7}>DANILO MARTINEZ- 5TO ADMON</TitleCell>,
      ...COLS.slice(10).map(c => <Cell key={`r1${c || 'q'}`} />),
    ];
  }
  if (n === 9) {
    return [head,
      <CenterCell key="r9a" $span={2}>Caso 2</CenterCell>,
      ...rest.map(c => <Cell key={`r9${c || 'q'}`} />),
    ];
  }
  const BCell = TEXT_B.has(i) ? Cell : NumberCell;
  return [head,
    <Cell key={`r${n}a`}>{a}</Cell>,
    <BCell key={`r${n}b`}>{b}</BCell>,
    ...rest.map(c => (
      <Cell key={`r${n}${c || 'q'}`} $sel={n === 2 && c === 'D'}>
        {n === 2 && c === 'D' ? <Selection /> : null}
      </Cell>
    )),
  ];
};

export default function App() {
  return (
    <Page>
      <Global />
      <TitleBar>
        <Qat>
          <QatSlot $w={29}><Save /></QatSlot>
          <QatSlot $w={23}><Undo /></QatSlot>
          <QatSlot $w={16}><Chev c="#fff" /></QatSlot>
          <QatSlot $w={23}><Redo /></QatSlot>
          <QatSlot $w={22}><Chev c="#5f9d7c" /></QatSlot>
          <QatSlot $w={10}><Customize /></QatSlot>
        </Qat>
        <TitleText>{'Tarea 7- bloque 3- danilo martinez- computacion  -  Excel'}</TitleText>
        <WarnSlot><Warn /></WarnSlot>
        <UserName>Gerardo</UserName>
        <Avatar>G</Avatar>
        <WinBtn $w={70}><RibbonDisplay /></WinBtn>
        <WinBtn $w={22}><Minimize /></WinBtn>
        <WinBtn $w={70}><RestoreWin /></WinBtn>
        <WinBtn $w={22}><CloseX /></WinBtn>
      </TitleBar>

      <TabRow>
        {tabs.map(([t, w, on]) => (
          <Tab key={t} $w={w} $active={on}>{t}{on ? <TabMark /> : null}</Tab>
        ))}
        <Ask><Bulb />¿Qué desea hacer?</Ask>
        <Share><ShareIcon />Compartir</Share>
      </TabRow>

      <Ribbon>
        <Group $w={206}>
          <GroupBody $pl={5}>
            <Large $w={60}><LargeIcon><PivotIcon /></LargeIcon><Caption>Tabla<br />dinámica</Caption></Large>
            <Large $w={88}><LargeIcon><RecPivotIcon /></LargeIcon><Caption>Tablas dinámicas<br />recomendadas</Caption></Large>
            <Large $w={48}><LargeIcon><TableIcon /></LargeIcon><Caption>Tabla</Caption></Large>
          </GroupBody>
          <GroupLabel>Tablas</GroupLabel>
        </Group>
        <Group $w={83}>
          <GroupBody>
            <Large $w={82}><Boxed><ShapesIcon /></Boxed><Caption>Ilustraciones</Caption><ChevronRow><Chev /></ChevronRow></Large>
          </GroupBody>
        </Group>
        <Group $w={99}>
          <GroupBody>
            <Large $w={98}><Boxed><AddinIcon /></Boxed><Caption>Complementos</Caption><ChevronRow><Chev /></ChevronRow></Large>
          </GroupBody>
        </Group>
        <Group $w={316}>
          <GroupBody $pl={9}>
            <Large $w={83}><LargeIcon><RecChartIcon /></LargeIcon><Caption>Gráficos<br />recomendados</Caption></Large>
            <ChartGrid>
              <ChartCell><Bars1 /><Chev /></ChartCell>
              <ChartCell><Tree /><Chev /></ChartCell>
              <ChartCell><Waterfall /><Chev /></ChartCell>
              <ChartCell><LinesChart /><Chev /></ChartCell>
              <ChartCell><Histogram /><Chev /></ChartCell>
              <ChartCell><Combo /><Chev /></ChartCell>
              <ChartCell><Pie /><Chev /></ChartCell>
              <ChartCell><Scatter /><Chev /></ChartCell>
            </ChartGrid>
            <Large $w={38}><LargeIcon><Globe /></LargeIcon><Caption>Mapas</Caption><ChevronRow><Chev /></ChevronRow></Large>
            <Large $w={72}><LargeIcon><PivotChart /></LargeIcon><Caption>Gráfico<br />dinámico<InlineChev><Chev /></InlineChev></Caption></Large>
          </GroupBody>
          <GroupLabel $pr={17}>Gráficos</GroupLabel>
          <Launcher><Launch /></Launcher>
        </Group>
        <Group $w={58}>
          <GroupBody>
            <Large $w={57} $muted><LargeIcon><Map3D /></LargeIcon><Caption>Mapa<br />3D<InlineChev><Chev c="#b1b1b1" /></InlineChev></Caption></Large>
          </GroupBody>
          <GroupLabel>Paseos</GroupLabel>
        </Group>
        <Group $w={155}>
          <GroupBody $pl={11}>
            <SmallList>
              <SmallRow><SparkLine />Líneas</SmallRow>
              <SmallRow><SparkCols />Columnas</SmallRow>
              <SmallRow><SparkWin />Pérdidas y ganancias</SmallRow>
            </SmallList>
          </GroupBody>
          <GroupLabel>Minigráficos</GroupLabel>
        </Group>
        <Group $w={169}>
          <GroupBody $pl={11}>
            <SmallList>
              <SmallRow><Slicer />Segmentación de datos</SmallRow>
              <SmallRow><Timeline />Escala de tiempo</SmallRow>
            </SmallList>
          </GroupBody>
          <GroupLabel>Filtros</GroupLabel>
        </Group>
        <Group $w={61}>
          <GroupBody>
            <Large $w={60}><LargeIcon><LinkGlobe /></LargeIcon><Caption>Vínculo</Caption></Large>
          </GroupBody>
          <GroupLabel>Vínculos</GroupLabel>
        </Group>
        <Group $w={54}>
          <GroupBody>
            <Large $w={53}><Boxed><BoxGlyph>A</BoxGlyph></Boxed><Caption>Texto</Caption><ChevronRow><Chev /></ChevronRow></Large>
          </GroupBody>
        </Group>
        <Group $w={66}>
          <GroupBody>
            <Large $w={65}><Boxed><BoxGlyph $omega>Ω</BoxGlyph></Boxed><Caption>Símbolos</Caption><ChevronRow><Chev /></ChevronRow></Large>
          </GroupBody>
        </Group>
        <Collapse><Up /></Collapse>
      </Ribbon>

      <FormulaBar>
        <NameBox>D2<Tri d="down" c="#888" /></NameBox>
        <Dots><VDots /></Dots>
        <FxBox><XMark /><Check /><Fx>fx</Fx></FxBox>
        <Input><ChevBold /></Input>
      </FormulaBar>

      <SheetArea>
        <Sheet>
          <Corner />
          {COLS.map(c => <ColHead key={c || 'q'} $sel={c === 'D'}>{c}</ColHead>)}
          {DATA.map((_, i) => renderRow(i))}
        </Sheet>
        <VScroll>
          <ScrollBtn><Tri d="up" /></ScrollBtn>
          <VThumb />
          <VRest />
          <ScrollBtn><Tri d="down" /></ScrollBtn>
        </VScroll>
      </SheetArea>

      <SheetBar>
        <NavArrows><Tri d="left" c="#c0c0c0" /><Tri d="right" c="#c0c0c0" /></NavArrows>
        <SheetTab>Hoja1</SheetTab>
        <AddSheet><Plus /></AddSheet>
        <HScrollWrap>
          <Grip><VDots /></Grip>
          <ScrollBtn><Tri d="left" c="#555" /></ScrollBtn>
          <HTrack />
          <HRest />
          <ScrollBtn><Tri d="right" c="#555" /></ScrollBtn>
        </HScrollWrap>
      </SheetBar>

      <StatusBar>
        Listo
        <Views>
          <ViewBtn $active><ViewNormal /></ViewBtn>
          <ViewBtn><ViewPage /></ViewBtn>
          <ViewBtn><ViewBreak /></ViewBtn>
        </Views>
        <ZoomBox><Minus /><SliderLine><SliderThumb /></SliderLine><PlusSmall /></ZoomBox>
        <Pct>100 %</Pct>
      </StatusBar>

      <Taskbar>
        <Start><Windows /></Start>
        <Search><SearchGlass />Escribe aquí para buscar</Search>
        <TaskSlot $w={50}><Cortana /></TaskSlot>
        <TaskSlot $w={44}><TaskView /></TaskSlot>
        <TaskSlot $w={40} $on $ml={10}><Edge /></TaskSlot>
        <TaskSlot $w={48} $ml={4}><Store /></TaskSlot>
        <TaskSlot $w={48} $ml={2}><Mail /></TaskSlot>
        <TaskSlot $w={50}><Folder /></TaskSlot>
        <TaskSlot $w={48} $on $active><ExcelLogo /></TaskSlot>
        <TaskSlot $w={40} $on $ml={5}><WordLogo /></TaskSlot>
        <Tray>
          <TraySlot $w={40}><Cloud /></TraySlot>
          <TrayText $w={38}>16°C</TrayText>
          <TrayText $w={84} $size={13.5}>Lluvia ligera</TrayText>
          <TraySlot $w={25}><Up w={12} /></TraySlot>
          <TraySlot $w={24}><Speaker /></TraySlot>
          <TraySlot $w={22}><SyncPc /></TraySlot>
          <TraySlot $w={35}><TrayText $w={18} $size={11}>ESP</TrayText></TraySlot>
          <Clock>08:27<br />24/08/2021</Clock>
          <Notify><Message /><Badge>7</Badge></Notify>
        </Tray>
      </Taskbar>
    </Page>
  );
}
